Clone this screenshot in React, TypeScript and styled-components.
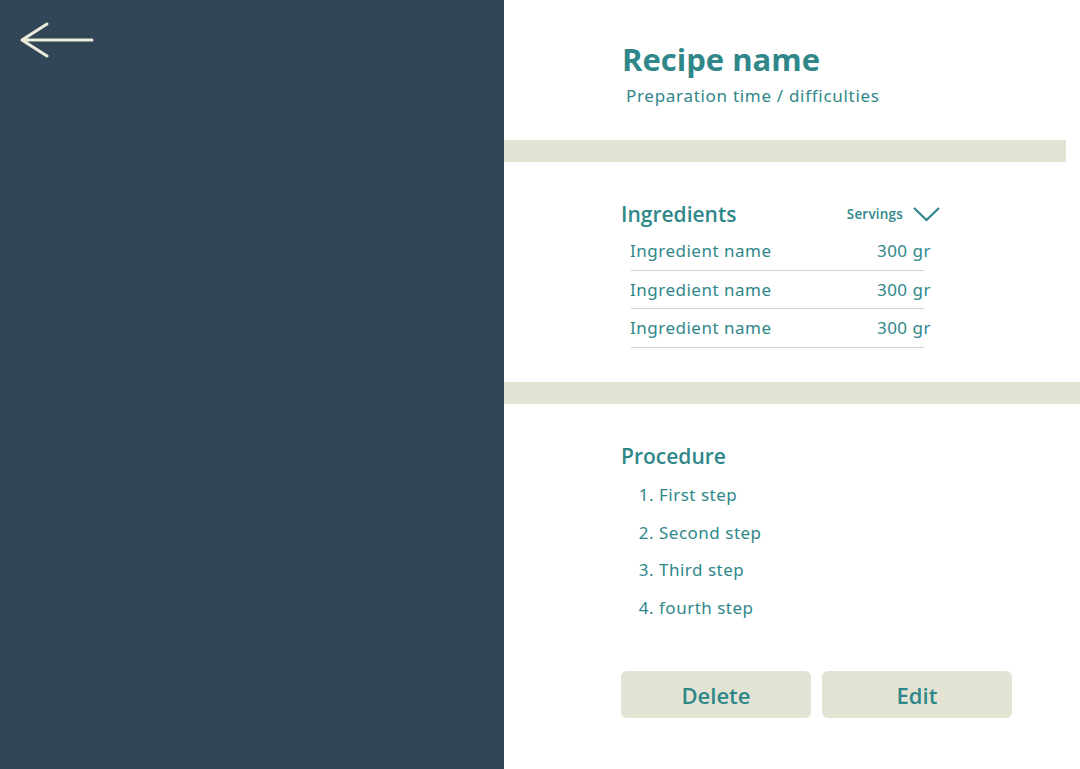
import React from "react";
import styled, { createGlobalStyle } from "styled-components";

const teal = "#2f878a";
const band = "#e3e3d3";

const Global = createGlobalStyle`
  html, body { margin: 0; padding: 0; background: #ffffff; }
  #root { height: 769px; }
`;

const Page = styled.div`
  display: flex;
  width: 1080px;
  height: 769px;
  overflow: hidden;
`;

const Side = styled.aside`
  width: 504px;
  flex: none;
  background: #314757;
  padding: 20px 0 0 20px;
  box-sizing: border-box;
`;

const BackButton = styled.button`
  background: none;
  border: none;
  padding: 0;
  display: block;
  cursor: pointer;
`;

const Main = styled.main`
  flex: 1;
  display: flex;
  flex-direction: column;
  font-family: "Noto Sans", sans-serif;
  color: ${teal};
`;

const Header = styled.header`
  padding: 37px 0 0 118px;
  height: 140px;
  box-sizing: border-box;
`;

const Title = styled.h1`
  margin: 0;
  font-family: "Open Sans", sans-serif;
  font-weight: 700;
  font-size: 31px;
  line-height: 44px;
`;

const Subtitle = styled.p`
  margin: 3px 0 0 4px;
  font-size: 17px;
  line-height: 24px;
  letter-spacing: 0.7px;
`;

const Band = styled.div<{ $right: number }>`
  height: 22px;
  background: ${band};
  margin-right: ${(p) => p.$right}px;
  flex: none;
`;

const Section = styled.section<{ $height: number; $top: number }>`
  height: ${(p) => p.$height}px;
  box-sizing: border-box;
  padding: ${(p) => p.$top}px 0 0 117px;
`;

const SectionHead = styled.div`
  display: flex;
  align-items: center;
  width: 319px;
  justify-content: space-between;
`;

const Heading = styled.h2`
  margin: 0;
  font-family: "Open Sans", sans-serif;
  font-weight: 600;
  font-size: 21px;
  line-height: 30px;
`;

const Servings = styled.button`
  display: flex;
  align-items: center;
  gap: 10px;
  background: none;
  border: none;
  padding: 0;
  color: ${teal};
  font-family: "Open Sans", sans-serif;
  font-weight: 600;
  font-size: 13.5px;
  letter-spacing: 0.2px;
`;

const List = styled.ul`
  list-style: none;
  margin: 3px 0 0 9px;
  padding: 0;
  width: 301px;
`;

const Row = styled.li`
  display: flex;
  justify-content: space-between;
  align-items: center;
  height: 38.5px;
  box-sizing: border-box;
  padding: 0 0 1px 0;
  font-size: 17px;
  letter-spacing: 0.5px;
  position: relative;
  &::after {
    content: "";
    position: absolute;
    left: 1px;
    right: 7px;
    bottom: 0;
    height: 1px;
    background: #cfcfcf;
  }
`;

const Steps = styled.ol`
  margin: 5px 0 0 0;
  padding: 0;
  list-style: none;
`;

const Step = styled.li`
  display: flex;
  height: 37.5px;
  align-items: center;
  font-size: 17px;
  letter-spacing: 0.5px;
  gap: 5px;
`;

const StepNum = styled.span`
  width: 33px;
  text-align: right;
`;

const Buttons = styled.div`
  display: flex;
  gap: 11px;
  margin-top: 45px;
`;

const Action = styled.button`
  width: 190px;
  height: 47px;
  border: none;
  border-radius: 6px;
  background: ${band};
  color: ${teal};
  font-family: "Open Sans", sans-serif;
  font-weight: 600;
  font-size: 22px;
  padding: 0;
`;

const ingredients = [
  { name: "Ingredient name", qty: "300 gr" },
  { name: "Ingredient name", qty: "300 gr" },
  { name: "Ingredient name", qty: "300 gr" },
];

const steps = ["First step", "Second step", "Third step", "fourth step"];

export default function App() {
  return (
    <>
      <Global />
      <Page>
        <Side>
          <BackButton aria-label="Back">
            <svg width="76" height="40" viewBox="0 0 76 40">
              <path
                d="M2 20 H72 M2 20 L27 4 M2 20 L27 36"
                stroke="#ecebdc"
                strokeWidth="3"
                strokeLinecap="round"
                strokeLinejoin="round"
                fill="none"
              />
            </svg>
          </BackButton>
        </Side>
        <Main>
          <Header>
            <Title>Recipe name</Title>
            <Subtitle>Preparation time / difficulties</Subtitle>
          </Header>
          <Band $right={14} />
          <Section $height={220} $top={37}>
            <SectionHead>
              <Heading>Ingredients</Heading>
              <Servings>
                Servings
                <svg width="27" height="15" viewBox="0 0 27 15">
                  <path d="M1 1 L13.5 13 L26 1" stroke={teal} strokeWidth="2.2" fill="none" />
                </svg>
              </Servings>
            </SectionHead>
            <List>
              {ingredients.map((i, k) => (
                <Row key={k}>
                  <span>{i.name}</span>
                  <span>{i.qty}</span>
                </Row>
              ))}
            </List>
          </Section>
          <Band $right={0} />
          <Section $height={365} $top={37}>
            <Heading>Procedure</Heading>
            <Steps>
              {steps.map((s, k) => (
                <Step key={k}>
                  <StepNum>{k + 1}.</StepNum>
                  <span>{s}</span>
                </Step>
              ))}
            </Steps>
            <Buttons>
              <Action>Delete</Action>
              <Action>Edit</Action>
            </Buttons>
          </Section>
        </Main>
      </Page>
    </>
  );
}
